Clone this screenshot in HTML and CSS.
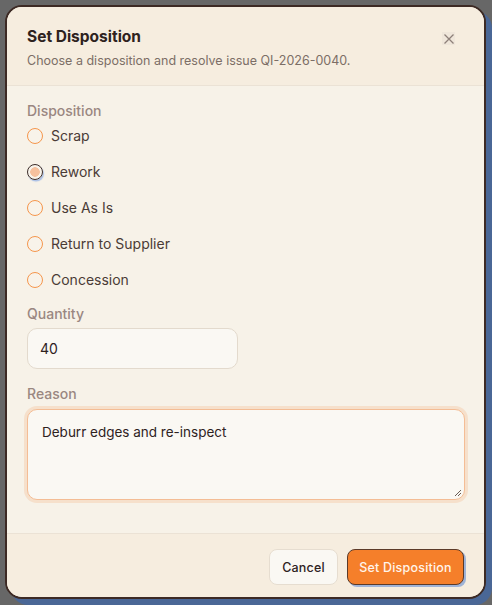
FILE: index.html
```html
<!DOCTYPE html>
<html lang="en">
<head>
<meta charset="utf-8">
<title>Set Disposition</title>
<link rel="stylesheet" href="styles.css">
</head>
<body>
<div class="dialog">
  <div class="header">
    <div class="titles">
      <h2 class="title">Set Disposition</h2>
      <p class="subtitle">Choose a disposition and resolve issue QI-2026-0040.</p>
    </div>
    <button class="close" aria-label="Close">
      <svg width="10" height="10" viewBox="0 0 10 10"><path d="M0.5 0.5L9.5 9.5M9.5 0.5L0.5 9.5" stroke="#8d8079" stroke-width="1.3" fill="none"/></svg>
    </button>
  </div>
  <div class="body">
    <div class="field">
      <div class="label">Disposition</div>
      <div class="radios">
        <label class="radio"><span class="dot"></span><span>Scrap</span></label>
        <label class="radio"><span class="dot checked"></span><span>Rework</span></label>
        <label class="radio"><span class="dot"></span><span>Use As Is</span></label>
        <label class="radio"><span class="dot"></span><span>Return to Supplier</span></label>
        <label class="radio"><span class="dot"></span><span>Concession</span></label>
      </div>
    </div>
    <div class="field">
      <div class="label">Quantity</div>
      <div class="input">40</div>
    </div>
    <div class="field">
      <div class="label">Reason</div>
      <div class="textarea">Deburr edges and re-inspect
        <svg class="grip" width="8" height="8" viewBox="0 0 8 8"><path d="M7 1L1 7M7 4L4 7" stroke="#6a5d55" stroke-width="1"/></svg>
      </div>
    </div>
  </div>
  <div class="footer">
    <button class="btn cancel">Cancel</button>
    <button class="btn primary">Set Disposition</button>
  </div>
</div>
</body>
</html>
```

FILE: styles.css
```css
* { box-sizing: border-box; }
html, body { margin: 0; padding: 0; }
body {
  background: #676767;
  width: 492px;
  height: 605px;
  overflow: hidden;
  font-family: Inter, "Noto Sans", sans-serif;
  padding: 5px 0 0 5px;
}
.dialog {
  width: 481px;
  height: 594px;
  background: #f7f2e8;
  border: 2px solid #3d2a24;
  border-radius: 17px;
  box-shadow: 6px 6px 0 #4a6796;
  overflow: hidden;
  display: flex;
  flex-direction: column;
}
.header {
  background: #f6eddf;
  border-bottom: 1px solid #ebe2d5;
  height: 79px;
  padding: 20px 20px 0 20px;
  display: flex;
  justify-content: space-between;
  align-items: flex-start;
}
.title {
  margin: 0;
  font-size: 15.5px;
  font-weight: 700;
  color: #2e221e;
  line-height: 20px;
}
.subtitle {
  margin: 6px 0 0 0;
  font-size: 12.5px;
  color: #7c6e66;
  line-height: 16px;
}
.close {
  background: #efe6da;
  border: none;
  padding: 0;
  width: 13px;
  height: 13px;
  margin-top: 5px;
  margin-right: 9px;
  display: flex;
  align-items: center;
  justify-content: center;
}
.body {
  flex: 1;
  padding: 15px 20px 0 20px;
  display: flex;
  flex-direction: column;
  gap: 14px;
}
.field { display: flex; flex-direction: column; }
.field + .field + .field { margin-top: 1px; }
.label {
  font-size: 14px;
  color: #9a8781;
  line-height: 20px;
  font-weight: 500;
}
.radios { display: flex; flex-direction: column; margin-top: 5px; gap: 16px; }
.radio {
  display: flex;
  align-items: center;
  gap: 8px;
  font-size: 14px;
  color: #4a3b36;
  line-height: 20px;
  height: 20px;
}
.dot {
  width: 16px;
  height: 16px;
  border: 1.5px solid #f5964c;
  border-radius: 50%;
  background: #f8f3ea;
  flex: none;
}
.dot.checked {
  border: 1.5px solid #3d2e2a;
  background: radial-gradient(circle, #f6c19e 0 4.5px, #f8f3ea 5px);
  box-shadow: 1px 1.5px 1px #a9bfe6;
}
.input {
  margin-top: 4px;
  width: 211px;
  height: 41px;
  border: 1px solid #e3dacd;
  border-radius: 10px;
  background: #faf8f3;
  font-size: 14px;
  color: #2e221e;
  padding: 0 12px;
  display: flex;
  align-items: center;
}
.textarea {
  position: relative;
  margin-top: 5px;
  width: 438px;
  height: 91px;
  border: 1px solid #f4bd95;
  border-radius: 10px;
  background: #faf8f3;
  box-shadow: 0 0 0 3px #f6e0cb;
  font-size: 13.5px;
  color: #2e221e;
  padding: 12px 14px;
  line-height: 20px;
}
.grip { position: absolute; right: 2px; bottom: 2px; }
.footer {
  background: #f6eddf;
  border-top: 1px solid #ebe2d5;
  height: 64px;
  padding: 15px 20px 0 0;
  display: flex;
  justify-content: flex-end;
  align-items: flex-start;
  gap: 9px;
}
.btn {
  font-family: Inter, "Noto Sans", sans-serif;
  height: 36px;
  border-radius: 8px;
  font-size: 12.5px;
  font-weight: 500;
  letter-spacing: 0.2px;
  cursor: pointer;
}
.cancel {
  width: 69px;
  margin-left: 1px;
  background: #faf8f3;
  border: 1px solid #e6ddd0;
  color: #2e221e;
}
.primary {
  width: 117px;
  background: #f57f2a;
  border: 1px solid #5c3a28;
  color: #fff4ea;
  box-shadow: 2px 2px 0 #9fb3d6;
}
```
